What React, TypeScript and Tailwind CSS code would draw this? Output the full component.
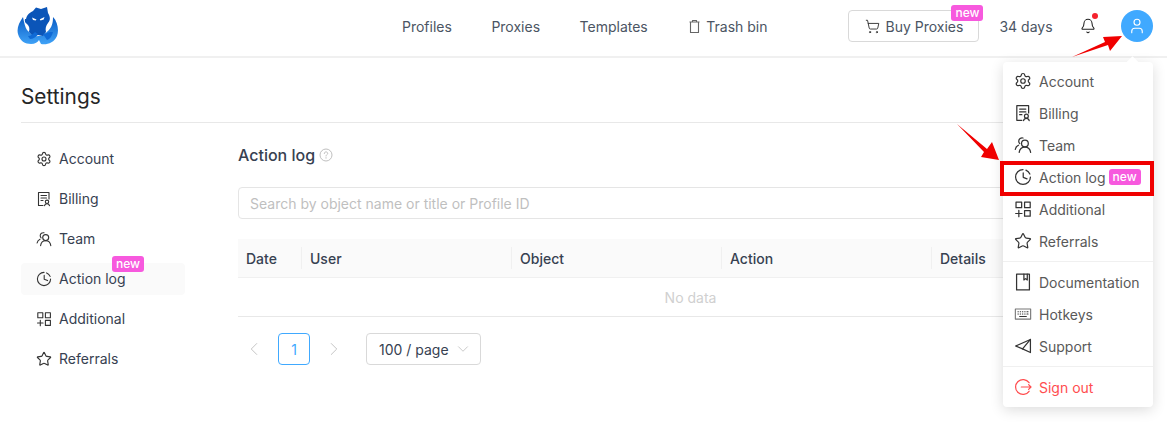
import React from 'react';
import { Settings, Star, ShoppingCart, Bell, User, ChevronLeft, ChevronRight, ChevronDown } from 'lucide-react';

type IconProps = { size?: number; strokeWidth?: number; className?: string };

const Svg = ({ size = 16, className = '', children }: IconProps & { children: React.ReactNode }) => (
  <svg width={size} height={size} viewBox="0 0 16 16" fill="none" stroke="currentColor" strokeWidth="1.1" strokeLinecap="round" strokeLinejoin="round" className={className}>
    {children}
  </svg>
);

const BillingIcon = (p: IconProps) => (
  <Svg {...p}>
    <path d="M7 14.500H2.500V1.500h10.500V8" />
    <path d="M5 4.500h5.500M5 7h5.500M5 9.500h2" />
    <circle cx="11" cy="10.800" r="1.700" />
    <path d="M8.500 14.700c.3-1.300 1.300-2 2.500-2s2.200.7 2.500 2" />
  </Svg>
);

const TeamIcon = (p: IconProps) => (
  <Svg {...p}>
    <circle cx="9.700" cy="6.600" r="3" />
    <path d="M4.600 14.600c.4-2.900 2.600-4.800 5.100-4.800s4.700 1.900 5.100 4.800" />
    <path d="M8 1.800A3 3 0 0 0 4.200 4.600c0 .9.3 1.600.9 2.200M4 8.200c-1.600.7-2.600 2-2.900 3.800" />
  </Svg>
);

const LogIcon = (p: IconProps) => (
  <Svg {...p}>
    <path d="M14.600 8A6.600 6.600 0 1 1 8 1.400" />
    <path d="M8.200 4.400v3.900l3.400 1.300" />
    <path d="M10.600 1.900c1.600.7 2.800 1.900 3.500 3.500" />
  </Svg>
);

const AdditionalIcon = (p: IconProps) => (
  <Svg {...p}>
    <rect x="1.800" y="1.800" width="5" height="5" />
    <rect x="9.400" y="1.800" width="5" height="5" />
    <rect x="9.400" y="9.400" width="5" height="5" />
    <path d="M4.300 9.200v5.600M1.500 12h5.600" />
  </Svg>
);

const BookIcon = (p: IconProps) => (
  <Svg {...p}>
    <rect x="2.300" y="1" width="11.400" height="14" />
    <path d="M8.800 1v5.200l1.500-1.200 1.500 1.200V1" />
  </Svg>
);

const KeyboardIcon = (p: IconProps) => (
  <Svg {...p}>
    <rect x="1.200" y="3.500" width="13.600" height="9" strokeWidth="1" className="text-[#777]" />
    <path d="M3.500 6h.4M5.500 6h.4M7.500 6h.4M9.500 6h.4M11.500 6h1M3.500 8h.4M5.500 8h.4M7.500 8h.4M9.500 8h.4M11.500 8h1M5 10.300h6" strokeWidth="0.9" />
  </Svg>
);

const SendIcon = (p: IconProps) => (
  <Svg {...p}>
    <path d="M14.600 2.200v11.600L7.600 10.600 1.400 8z" />
    <path d="M14.600 2.200 7.600 10.600" />
  </Svg>
);

const SignOutIcon = (p: IconProps) => (
  <Svg {...p}>
    <path d="M13.400 4.200A6.600 6.600 0 1 0 13.400 11.800" />
    <path d="M6.500 8h8.600M13 5.900 15.100 8 13 10.100" />
  </Svg>
);

const TrashIcon = () => (
  <svg width="15" height="15" viewBox="0 0 15 15" fill="none" stroke="currentColor" strokeWidth="1.1" className="text-[#666]">
    <path d="M2.500 3h10M5.500 3V1.500h4V3M3.500 3v10.500h8V3" strokeLinejoin="round" />
  </svg>
);

const Logo = () => (
  <svg width="42" height="40" viewBox="0 0 42 40">
    <defs>
      <linearGradient id="logoBlue" x1="0" y1="0" x2="0" y2="1">
        <stop offset="0" stopColor="#0a5cc4" />
        <stop offset="1" stopColor="#3fa2f7" />
      </linearGradient>
    </defs>
    <path d="M6 11C2 17-.5 22 1 28c2 7 7 10 13 10 4 0 7-2 8-4l2 4c6 1 13-1 16-8 2-5 1-14-4-19 0 6-1 10-5 14-3 2-4 5-9 5-6 1-9-3-12-6-2-3-3-8-4-13z" fill="url(#logoBlue)" />
    <path d="M9 13c1-5 5-7 7-8l3-3.500L24 3l6-2 1 6c2 3 3 7 0 10-2 3-3 5-2 9l-3 4-5-1-4 2-5-5c1-4 0-6-2-8-2-1-2.500-3-2-5z" fill="#0b55b8" />
    <path d="M13 33c3 0 6-2 8-5l-3-2c-2 2-4 4-7 4zM26 28l4 6c3-1 5-4 6-8l-3 0-3 1z" fill="#0f6ad6" />
    <path d="M15 11.500l4.500 2-.8 1-2.700-.5zM27.500 11l-.8 2.500-3.200 1-.7-1.300z" fill="#ffffff" />
  </svg>
);

const menuTop = [
  { label: 'Account', icon: Settings },
  { label: 'Billing', icon: BillingIcon },
  { label: 'Team', icon: TeamIcon },
  { label: 'Action log', icon: LogIcon },
  { label: 'Additional', icon: AdditionalIcon },
  { label: 'Referrals', icon: Star },
];

const menuHelp = [
  { label: 'Documentation', icon: BookIcon },
  { label: 'Hotkeys', icon: KeyboardIcon },
  { label: 'Support', icon: SendIcon },
];

const columns = [
  { label: 'Date', width: 'w-[64px]' },
  { label: 'User', width: 'w-[210px]' },
  { label: 'Object', width: 'w-[210px]' },
  { label: 'Action', width: 'w-[210px]' },
  { label: 'Details', width: 'flex-1' },
];

const NewBadge = () => (
  <span className="block h-[16px] w-[32px] rounded-[3px] bg-[#f759de] text-center text-[12px] leading-[16px] font-medium text-white">new</span>
);

const Header = () => (
  <header className="relative flex h-[58px] items-center border-b-2 border-[#f0f0f0] bg-white pb-[4px]">
    <div className="ml-[17px] flex">
      <Logo />
    </div>
    <nav className="mt-[1px] ml-[343px] flex items-center text-[14px] text-[#4b5563]">
      <a className="mr-[39.5px]">Profiles</a>
      <a className="mr-[39.5px]">Proxies</a>
      <a className="mr-[39.5px]">Templates</a>
      <a className="flex items-center gap-[4px]">
        <TrashIcon />
        Trash bin
      </a>
    </nav>
    <div className="relative ml-[81px] flex h-[32px] w-[131px] items-center justify-center gap-[6px] rounded-[4px] border border-[#d9d9d9] text-[14px] text-[#4b5563]">
      <ShoppingCart size={15} strokeWidth={1.5} className="text-[#333]" />
      Buy Proxies
      <span className="absolute top-[-6px] right-[-5px]">
        <NewBadge />
      </span>
    </div>
    <span className="mt-[1px] ml-[20px] text-[14px] text-[#4b5563]">34 days</span>
    <div className="relative ml-[27px]">
      <Bell size={16} strokeWidth={1.6} className="text-[#222]" />
      <span className="absolute top-[-5px] right-[-2px] h-[6px] w-[6px] rounded-full bg-[#f5222d]" />
    </div>
    <div className="ml-[25px] flex h-[32px] w-[32px] items-center justify-center rounded-full bg-[#40a9ff]">
      <User size={18} strokeWidth={1.5} className="text-white" />
    </div>
  </header>
);

const Sidebar = () => (
  <aside className="w-[164px] shrink-0 pt-[20px] text-[14px] text-[#374151]">
    {menuTop.map((item) => (
      <div
        key={item.label}
        className={`relative mb-[8px] flex h-[32px] items-center gap-[7px] rounded-[4px] pb-[1px] pl-[15px] ${
          item.label === 'Action log' ? 'bg-[#fafafa]' : ''
        }`}
      >
        <item.icon size={16} strokeWidth={1.7} className="text-[#333]" />
        {item.label}
        {item.label === 'Action log' && (
          <span className="absolute top-[-7px] left-[91px]">
            <NewBadge />
          </span>
        )}
      </div>
    ))}
  </aside>
);

const Content = () => (
  <section className="min-w-0 flex-1 pl-[53px]">
    <div className="mt-[20px] flex h-[24px] items-center gap-[4px] text-[16px] font-medium text-[#374151]">
      Action log
      <svg width="14" height="14" viewBox="0 0 14 14" className="text-[#bfbfbf]" fill="none" stroke="currentColor" strokeWidth="1">
        <circle cx="7" cy="7" r="6" />
        <path d="M5.300 5.500c0-1 .8-1.600 1.700-1.600s1.700.6 1.700 1.500c0 1.200-1.700 1.200-1.700 2.600" strokeLinecap="round" />
        <path d="M7 9.600v.6" strokeLinecap="round" />
      </svg>
    </div>
    <div className="mt-[20px] flex h-[32px] w-[908px] items-center rounded-[4px] border border-[#e5e5e5] pl-[11px] text-[14px] text-[#bfbfbf]">
      Search by object name or title or Profile ID
    </div>
    <div className="mt-[20px] w-[908px]">
      <div className="flex h-[39px] items-center border-b border-[#f0f0f0] bg-[#fafafa] text-[14px] font-medium text-[#374151]">
        {columns.map((c, i) => (
          <div key={c.label} className={`${c.width} relative pl-[8px]`}>
            {c.label}
            {i < columns.length - 1 && (
              <span className="absolute top-[-1px] right-0 h-[22px] w-px bg-[#f0f0f0]" />
            )}
          </div>
        ))}
      </div>
      <div className="flex h-[39px] items-center justify-center border-b border-[#e8e8e8] pr-[3px] text-[14px] text-[#d0d0d0]">
        No data
      </div>
    </div>
    <div className="mt-[16px] flex items-center">
      <div className="flex h-[32px] w-[32px] items-center justify-center">
        <ChevronLeft size={22} strokeWidth={1} className="text-[#bfbfbf]" />
      </div>
      <div className="ml-[8px] flex h-[32px] w-[32px] items-center justify-center rounded-[4px] border border-[#40a9ff] text-[14px] text-[#40a9ff]">
        1
      </div>
      <div className="ml-[8px] flex h-[32px] w-[32px] items-center justify-center">
        <ChevronRight size={22} strokeWidth={1} className="text-[#bfbfbf]" />
      </div>
      <div className="ml-[16px] flex h-[32px] w-[115px] items-center justify-between rounded-[4px] border border-[#d9d9d9] pr-[8px] pl-[12px] text-[14px] text-[#374151]">
        100 / page
        <ChevronDown size={18} strokeWidth={1.1} className="text-[#bfbfbf]" />
      </div>
    </div>
  </section>
);

const MenuRow = ({ label, icon: Icon, children }: { label: string; icon: React.ElementType; children?: React.ReactNode }) => (
  <div className="flex h-[32px] items-center gap-[7px] pl-[11px] text-[14px] text-[#595959]">
    <Icon size={18} strokeWidth={1.6} className="text-[#333]" />
    {label}
    {children}
  </div>
);

const UserMenu = () => (
  <div className="absolute top-[62px] left-[1003px] h-[345px] w-[150px] rounded-[4px] bg-white py-[3px] shadow-[0_3px_14px_rgba(0,0,0,0.14)]">
    <span className="absolute top-[-4px] left-[125px] h-[9px] w-[9px] rotate-45 bg-white" />
    {menuTop.map((item) => (
      <MenuRow key={item.label} label={item.label} icon={item.icon}>
        {item.label === 'Action log' && <span className="ml-[-4px]"><NewBadge /></span>}
      </MenuRow>
    ))}
    <div className="my-[4px] h-px bg-[#f0f0f0]" />
    {menuHelp.map((item) => (
      <MenuRow key={item.label} label={item.label} icon={item.icon} />
    ))}
    <div className="my-[4px] h-px bg-[#f0f0f0]" />
    <div className="flex h-[32px] items-center gap-[7px] pl-[11px] text-[14px] text-[#ff4d4f]">
      <SignOutIcon size={18} />
      Sign out
    </div>
  </div>
);

// red annotations drawn over the screenshot
const Annotations = () => (
  <>
    <svg width="60" height="36" viewBox="0 0 60 36" className="absolute top-[26px] left-[1070px]">
      <path d="M2 31 L35 16 L33 11 L52 10 L40 25 L38 19 Z" fill="#f00000" />
    </svg>
    <svg width="50" height="44" viewBox="0 0 50 44" className="absolute top-[121px] left-[954px]">
      <path d="M3 3 L33 28 L38 21 L45 39 L27 36 L30 31 Z" fill="#f00000" />
    </svg>
    <div className="absolute top-[161px] left-[1000px] h-[35px] w-[154px] border-[4px] border-[#f00000]" />
  </>
);

export default function App() {
  return (
    <div className="relative h-[426px] w-[1167px] overflow-hidden bg-white font-['Inter',sans-serif]">
      <Header />
      <main className="px-[21px]">
        <h1 className="flex h-[65px] items-center border-b border-[#e8e8e8] pt-[14px] text-[20.8px] leading-[28px] font-normal text-[#262626]">
          Settings
        </h1>
        <div className="flex">
          <Sidebar />
          <Content />
        </div>
      </main>
      <UserMenu />
      <Annotations />
    </div>
  );
}
